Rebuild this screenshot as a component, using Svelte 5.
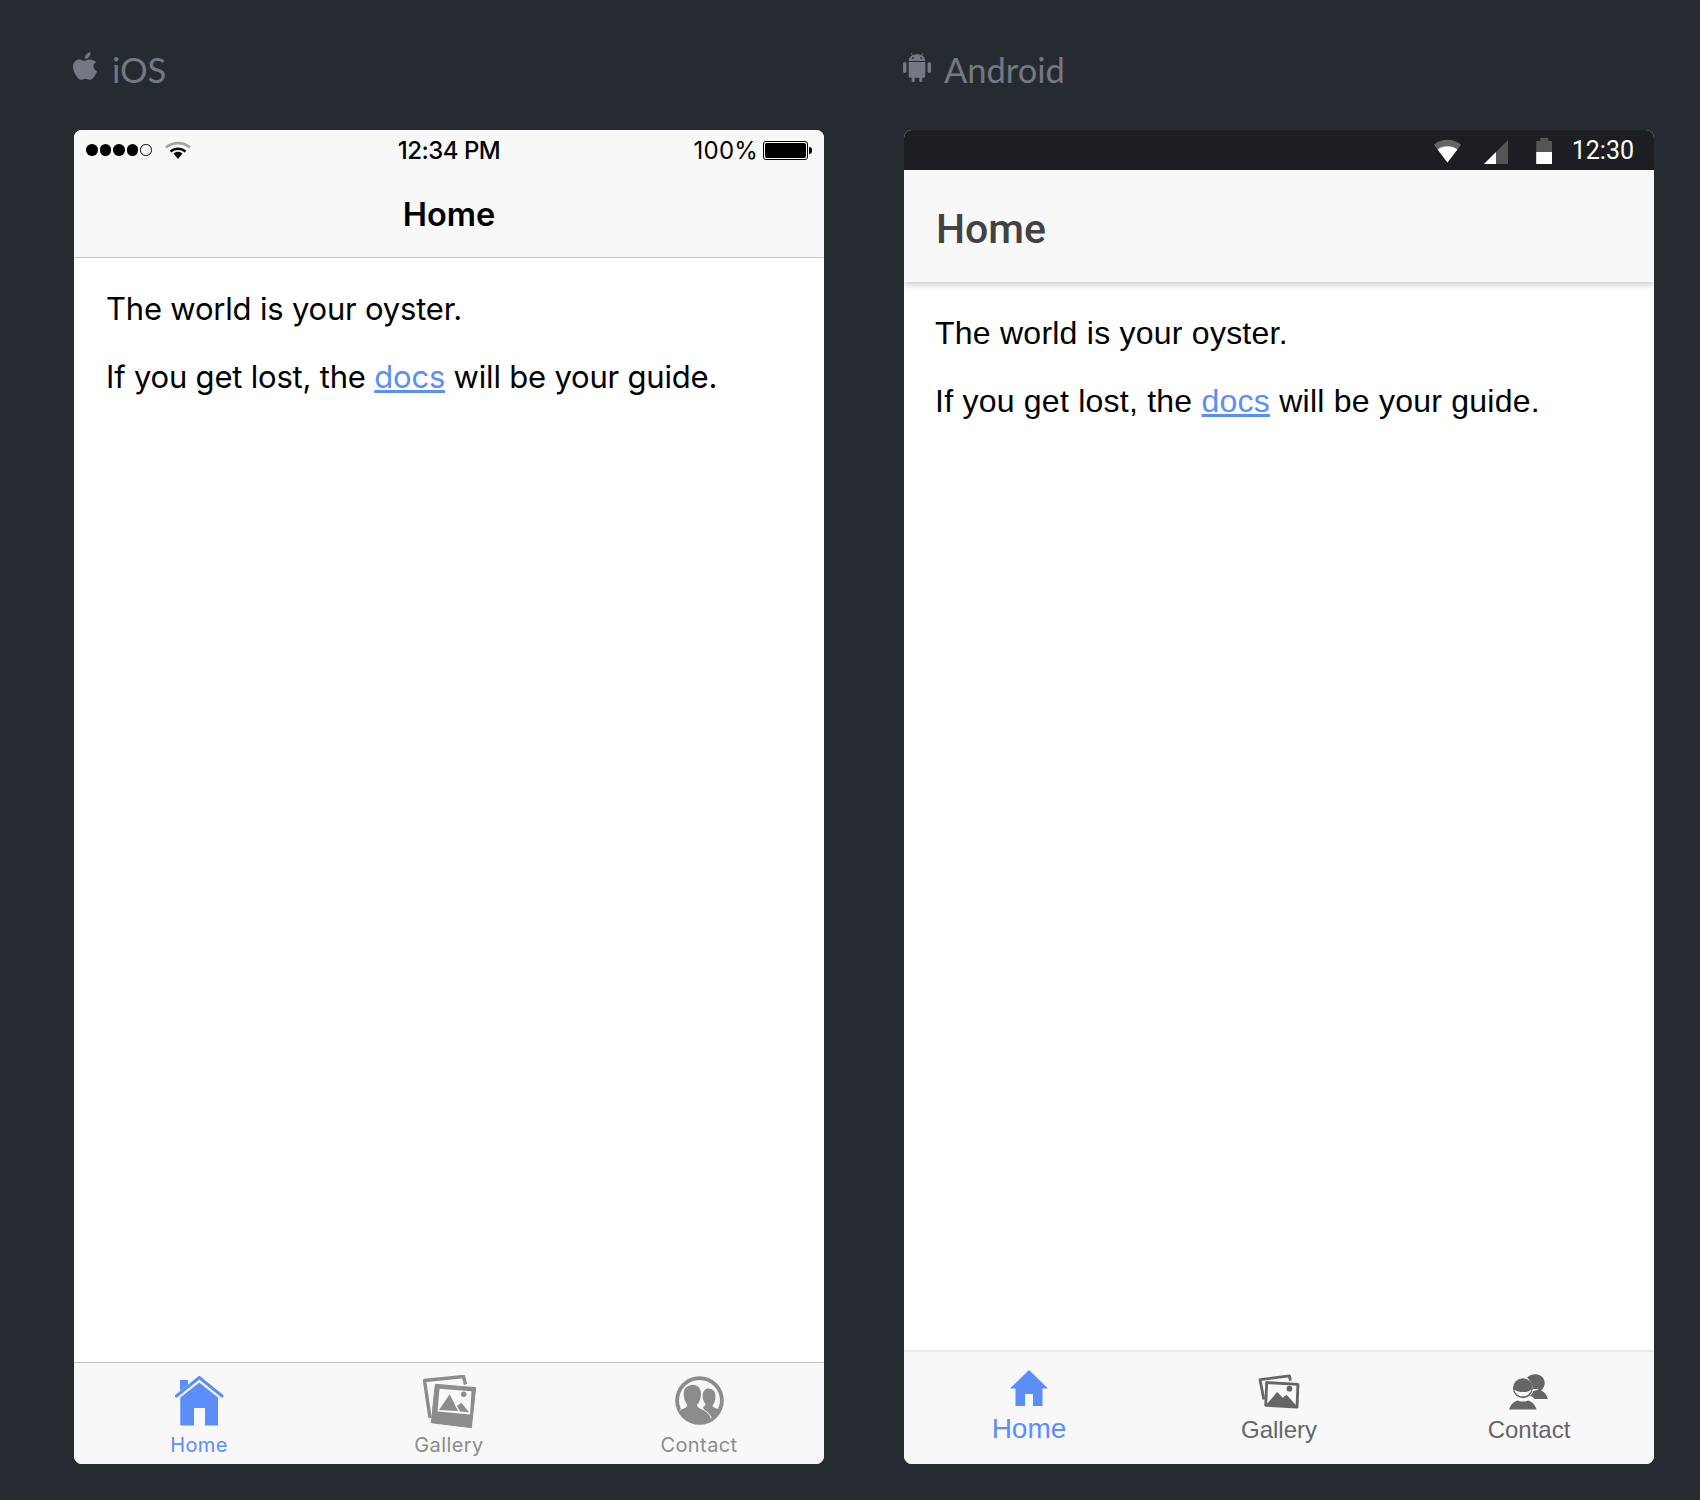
<script>
	const greeting = 'The world is your oyster.';
</script>

<svelte:head><title>Home</title></svelte:head>

<div class="page">
	<section class="col">
		<h2 class="platform">
			<svg class="plat-icon apple" viewBox="0 0 26 30">
				<path d="M18.2 0.2c.2 2-.6 3.6-1.6 4.8-1.1 1.3-2.6 2.2-4.3 2-.2-1.8.7-3.6 1.6-4.7C15 1.100 16.800.3 18.200.2zM24 10.200c-1.700 1.100-2.700 2.700-2.700 4.600 0 2.400 1.600 4.300 3.700 5.100-.6 1.800-1.500 3.500-2.600 5.100-1.300 1.900-2.600 3.900-4.600 3.900-1.900 0-2.500-1.200-4.800-1.200-2.200 0-2.900 1.200-4.700 1.200-2 0-3.500-2.100-4.800-4C1.200 22 0 18.200 0 15.500c0-5.100 3.300-7.800 6.600-7.800 2 0 3.500 1.300 4.900 1.300 1.300 0 3.100-1.400 5.300-1.400 2.900 0 5.600 1 7.200 2.600z" />
			</svg>
			iOS
		</h2>
		<div class="phone ios">
			<div class="ios-status">
				<span class="signal">
					{#each [1, 2, 3, 4] as d (d)}<i class="dot"></i>{/each}<i class="dot empty"></i>
				</span>
				<svg class="ios-wifi" viewBox="0 0 26 18">
					<path d="M1 6.500C7.500.6 18.500.6 25 6.500" fill="none" stroke="#a4a4a4" stroke-width="2.600" />
					<path d="M5.500 10.500c4.500-3.700 10.500-3.700 15 0" fill="none" stroke="#000" stroke-width="2.600" />
					<path d="M8.500 12.500c3-2.400 6-2.400 9 0L13 18z" />
				</svg>
				<span class="ios-time">12:34 PM</span>
				<span class="ios-batt-label">100%</span>
				<span class="ios-batt"><i></i></span>
			</div>
			<div class="ios-toolbar">Home</div>
			<div class="content ios-content">
				<p>{greeting}</p>
				<p>If you get lost, the <a href="#docs">docs</a> will be your guide.</p>
			</div>
			<nav class="ios-tabs">
				<div class="ios-tab active">
					<svg class="ios-tab-icon" viewBox="0 0 49 50">
						<path d="M1.500 20L24.300 1.500 47 20" fill="none" stroke="currentColor" stroke-width="3" stroke-linecap="round" />
						<path d="M5 4h8v4.500L5 15z" />
						<path d="M24.300 6.500L43 21.500V49.500H30V32H19v17.500H5.300V21.500z" />
					</svg>
					<span>Home</span>
				</div>
				<div class="ios-tab">
					<svg class="ios-tab-icon gallery" viewBox="0 0 53 53">
						<path d="M7 43L1.500 5.500 40.500 1.500l2 8" fill="none" stroke="currentColor" stroke-width="3.400" stroke-linejoin="round" />
						<path d="M12.300 9.300L52.700 12.700 48.300 52.700 8.300 47.700z" stroke="currentColor" stroke-width="1" stroke-linejoin="round" />
						<path d="M16.500 13.700L48.500 16.300 47 39.500 14.500 36.500z" fill="#f8f8f8" />
						<path d="M16 35L26.700 19.300 35 36z" />
						<path d="M34 31l4.300-3.300 7.700 9.500-9-.7z" />
						<circle cx="40.700" cy="19.300" r="2.700" />
					</svg>
					<span>Gallery</span>
				</div>
				<div class="ios-tab">
					<svg class="ios-tab-icon contact" viewBox="0 0 49 49">
						<defs>
							<clipPath id="contact-inner"><circle cx="24.500" cy="24.500" r="21.500" /></clipPath>
						</defs>
						<circle cx="24.500" cy="24.500" r="24.300" />
						<circle cx="24.500" cy="24.500" r="20.500" fill="#f8f8f8" />
						<g clip-path="url(#contact-inner)">
							<path d="M34 12.700c4 0 6.500 3 6.500 7.500 0 4-1.300 7.500-3 9.300.5 1.800 2.500 2.700 8.500 4.500l-2 8-12-2-4-9c1.500-.8 2.300-1.600 2.600-2.800-1.700-2-3-5.300-3-8.500 0-4.500 2.900-7.500 6.400-7.500z" />
							<path d="M17.700 8.700c5 0 8.300 3.500 8.300 9 0 4.500-1.500 8.800-4 11.300.3 2.500 2.500 3.500 5.500 4.800 4.500 2 7.500 5 9 10.200L30 52H0V38c2-3 5-4 9-5.500 2-.9 3.300-2 3.500-3.500-2.500-2.500-3.800-6.800-3.800-11.300 0-5.500 4-9 9-9z" stroke="#f8f8f8" stroke-width="1.800" paint-order="stroke" />
						</g>
					</svg>
					<span>Contact</span>
				</div>
			</nav>
		</div>
	</section>

	<section class="col">
		<h2 class="platform droid-label">
			<svg class="plat-icon droid" viewBox="0 0 28 30">
				<path d="M6 3.500L4.800 1.300l.7-.4L6.800 3.200C8 2.500 9.800 2.200 11 2.200s3 .3 4.200 1l1.300-2.300.7.400L16 3.500c2 1.300 3.300 3.200 3.300 5.500H2.700C2.700 6.700 4 4.800 6 3.500z" transform="translate(3 0)" />
				<path d="M5.700 10h16.600v14c0 1-.7 1.700-1.700 1.700h-1.300v3c0 2-3 2-3 0v-3h-4.600v3c0 2-3 2-3 0v-3H7.400c-1 0-1.700-.7-1.700-1.700z" />
				<rect x="0" y="10" width="3.400" height="11" rx="1.700" />
				<rect x="24.600" y="10" width="3.400" height="11" rx="1.700" />
				<circle cx="10" cy="6" r=".9" fill="#262b32" />
				<circle cx="18" cy="6" r=".9" fill="#262b32" />
			</svg>
			Android
		</h2>
		<div class="phone droid-phone">
			<div class="droid-status">
				<svg class="d-wifi" viewBox="0 0 26 22">
					<path d="M0 5C7-1.500 19-1.500 26 5L13 22z" fill="#666" />
					<path d="M3.500 9.500C9 5.500 17 5.500 22.500 9.500L13 22z" fill="#fff" />
				</svg>
				<svg class="d-cell" viewBox="0 0 24 24">
					<path d="M24 0v24H0z" fill="#555" />
					<path d="M12 12v12H0z" fill="#fff" />
				</svg>
				<span class="d-batt"><i></i></span>
				<span class="d-time">12:30</span>
			</div>
			<div class="droid-toolbar">Home</div>
			<div class="content droid-content">
				<p>{greeting}</p>
				<p>If you get lost, the <a href="#docs">docs</a> will be your guide.</p>
			</div>
			<nav class="droid-tabs">
				<div class="droid-tab active">
					<svg class="droid-tab-icon" viewBox="0 0 42 36">
						<path d="M21 0L40 18.500h-5.500V36H25V24h-8v12H7.500V18.500H2z" />
					</svg>
					<span>Home</span>
				</div>
				<div class="droid-tab">
					<svg class="droid-tab-icon" viewBox="0 0 44 38">
						<g fill="none" stroke="currentColor" stroke-width="3" stroke-linejoin="round">
							<path d="M6 27L2 6l31-4 1 5" />
							<path d="M9 9l33 2-1 24L8 33z" fill="#f8f8f8" />
						</g>
						<path d="M9 32l11-13 6 6 4-3 10 11v3z" />
						<circle cx="33" cy="15.500" r="3" />
					</svg>
					<span>Gallery</span>
				</div>
				<div class="droid-tab">
					<svg class="droid-tab-icon" viewBox="0 0 42 38">
						<path d="M19 4c2-3 7-4.500 11-3.500 5 1.200 8 5 7.500 10-.3 3-2 5.500-4 7 3 1 6 4 7.500 9H27c-1.500-2-3.500-3-5-3.500 1.500-1 3-3 3.500-5 1.500-.3 4-.8 6-2.500-3 .5-5.500.5-6.500 0 0-4-3-9-6-11.500z" />
						<circle cx="14.500" cy="15" r="10.500" />
						<path d="M14.500 37.500H0c1.500-5 5-8.500 9-9.500 3 1.500 8 1.500 11 0 4 1 7.500 4.500 9 9.500z" />
						<path d="M5.500 16.500c5 3.500 13 3.500 18 0-1 4-4.500 7-9 7s-8-3-9-7z" fill="#f8f8f8" />
					</svg>
					<span>Contact</span>
				</div>
			</nav>
		</div>
	</section>
</div>

<style>
	:global(body) {
		margin: 0;
		background: #262b32;
	}
	.page {
		display: flex;
		gap: 80px;
		padding: 0 46px 0 74px;
		height: 1500px;
		box-sizing: border-box;
		font-family: Inter, 'Liberation Sans', sans-serif;
	}
	.col {
		width: 750px;
		display: flex;
		flex-direction: column;
	}
	.platform {
		height: 130px;
		margin: 0;
		display: flex;
		align-items: center;
		gap: 14px;
		padding-top: 9px;
		box-sizing: border-box;
		color: #747882;
		font: 400 34.5px Lato, sans-serif;
	}
	.droid-label {
		gap: 13px;
	}
	.plat-icon {
		fill: #747882;
		flex: none;
	}
	.apple {
		width: 25px;
		height: 29px;
		margin: -6px 0 0 -1px;
	}
	.droid {
		width: 28px;
		height: 30px;
		margin: -6px 0 0 -1px;
	}
	.phone {
		height: 1334px;
		background: #fff;
		border-radius: 8px;
		overflow: hidden;
		display: flex;
		flex-direction: column;
	}
	.content {
		flex: 1;
		padding: 0 32px;
		color: #000;
		line-height: 42px;
	}
	.content p {
		margin: 0 0 26px;
	}
	.content a {
		color: #5b8ef9;
	}
	.ios-content {
		padding-top: 30px;
		font-size: 31px;
		letter-spacing: -0.2px;
	}
	.droid-content {
		padding-top: 30px;
		padding-left: 31px;
		font-family: 'Liberation Sans', sans-serif;
		font-size: 32px;
		letter-spacing: 0.24px;
	}

	.ios-status {
		height: 40px;
		background: #f8f8f8;
		display: flex;
		align-items: center;
		position: relative;
		padding: 0 12px;
		color: #000;
		font-size: 24px;
	}
	.signal {
		display: flex;
		gap: 2px;
	}
	.dot {
		width: 11.500px;
		height: 11.500px;
		border-radius: 50%;
		background: #000;
		box-sizing: border-box;
	}
	.dot.empty {
		background: none;
		border: 1px solid #000;
	}
	.ios-wifi {
		width: 26px;
		height: 18px;
		margin-left: 13px;
	}
	.ios-time {
		position: absolute;
		left: 0;
		right: 0;
		text-align: center;
		font-weight: 500;
		letter-spacing: -0.5px;
	}
	.ios-batt-label {
		margin-left: auto;
		letter-spacing: 0.2px;
	}
	.ios-batt {
		width: 45px;
		height: 19px;
		box-sizing: border-box;
		margin-left: 5px;
		margin-right: 4px;
		border: 1px solid #000;
		border-radius: 3px;
		padding: 1px;
		position: relative;
		display: block;
	}
	.ios-batt i {
		display: block;
		height: 100%;
		background: #000;
		border-radius: 2px;
	}
	.ios-batt::after {
		content: '';
		position: absolute;
		right: -5px;
		top: 5px;
		width: 3px;
		height: 7px;
		background: #000;
		border-radius: 0 3px 3px 0;
	}
	.ios-toolbar {
		height: 88px;
		box-sizing: border-box;
		background: #f8f8f8;
		border-bottom: 1px solid #c4c4c4;
		display: flex;
		align-items: center;
		justify-content: center;
		color: #000;
		font-size: 32.500px;
		font-weight: 600;
		padding-top: 2px;
	}
	.ios-tabs {
		height: 102px;
		box-sizing: border-box;
		background: #f8f8f8;
		border-top: 1px solid #c4c4c4;
		display: flex;
	}
	.ios-tab {
		flex: 1;
		display: flex;
		flex-direction: column;
		align-items: center;
		color: #8c8c8c;
		font-size: 20px;
		letter-spacing: 0.4px;
		padding-top: 13px;
		gap: 7px;
	}
	.ios-tab-icon {
		width: 49px;
		height: 50px;
		fill: currentColor;
	}
	.ios-tab-icon.gallery {
		width: 53px;
		height: 53px;
		margin: -1px 0 -2px;
	}
	.ios-tab-icon.contact {
		height: 49px;
		margin-bottom: 1px;
	}
	.active {
		color: #5b8ef9 !important;
	}

	.droid-status {
		height: 40px;
		background: #1c1e21;
		display: flex;
		align-items: center;
		justify-content: flex-end;
		color: #fff;
		padding-right: 20px;
	}
	.d-wifi {
		width: 27px;
		height: 24px;
		margin-top: 1px;
	}
	.d-cell {
		width: 24px;
		height: 24px;
		margin-left: 23px;
		margin-top: 3px;
	}
	.d-batt {
		display: block;
		width: 16px;
		height: 26px;
		margin-left: 28px;
		margin-top: 2px;
		background: #555;
		position: relative;
		clip-path: polygon(4px 0, 12px 0, 12px 3px, 16px 3px, 16px 100%, 0 100%, 0 3px, 4px 3px);
	}
	.d-batt i {
		position: absolute;
		left: 0;
		right: 0;
		bottom: 0;
		height: 12px;
		background: #fff;
	}
	.d-time {
		margin-left: 19.500px;
		font: 400 25px Roboto, sans-serif;
	}
	.droid-toolbar {
		height: 112px;
		box-sizing: border-box;
		background: #f8f8f8;
		box-shadow: 0 3px 6px rgba(0, 0, 0, 0.2);
		display: flex;
		align-items: center;
		padding: 5px 0 0 32px;
		color: #424242;
		font: 500 41px Roboto, sans-serif;
		position: relative;
	}
	.droid-tabs {
		height: 114px;
		box-sizing: border-box;
		background: #f8f8f8;
		border-top: 2px solid #e9e9e9;
		display: flex;
		font-family: 'Liberation Sans', sans-serif;
	}
	.droid-tab {
		flex: 1;
		display: flex;
		flex-direction: column;
		align-items: center;
		color: #666;
		font-size: 24px;
		padding-top: 22px;
		gap: 6px;
	}
	.droid-tab.active {
		font-size: 28px;
		padding-top: 18px;
		gap: 7px;
	}
	.droid-tab-icon {
		width: 42px;
		height: 36px;
		fill: currentColor;
	}
</style>
